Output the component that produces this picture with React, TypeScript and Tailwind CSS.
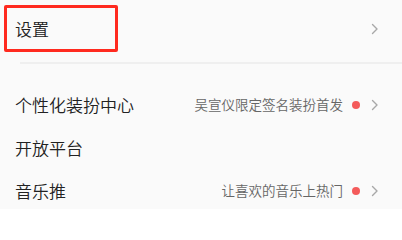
import React from "react";

function Chevron() {
  return (
    <svg width="8" height="12" viewBox="0 0 8 12" className="shrink-0">
      <polyline points="1.5,1.5 6,6 1.5,10.5" fill="none" stroke="#a8a8a8" strokeWidth="1.4" strokeLinecap="round" strokeLinejoin="round" />
    </svg>
  );
}

function Row({ title, hint, arrow = true }: { title: string; hint?: string; arrow?: boolean }) {
  return (
    <div className="flex h-[43px] items-center pl-[15px] pr-[23px]">
      <span className="flex-1 text-[17px] font-[350] text-[#222]">{title}</span>
      {hint && (
        <div className="flex items-center">
          <span className="text-[13.5px] font-[350] text-[#666]">{hint}</span>
          <span className="ml-[9px] h-[8px] w-[8px] rounded-full bg-[#f45b5b]" />
          <span className="ml-[11px]"><Chevron /></span>
        </div>
      )}
      {!hint && arrow && <Chevron />}
    </div>
  );
}

export default function App() {
  return (
    <div
      className="relative h-[209px] w-[402px] overflow-hidden bg-[#fafafa]"
      style={{ fontFamily: '"Noto Sans CJK SC", "Noto Sans", sans-serif' }}
    >
      <div className="flex h-[62px] items-center pb-[4px] pl-[15px] pr-[23px]">
        <span className="flex-1 text-[17px] font-[350] text-[#222]">设置</span>
        <Chevron />
      </div>
      <div className="ml-[20px] h-[2px] bg-[#efefef]" />
      <div className="pt-[19px]">
        <Row title="个性化装扮中心" hint="吴宣仪限定签名装扮首发" />
        <Row title="开放平台" arrow={false} />
        <Row title="音乐推" hint="让喜欢的音乐上热门" />
      </div>
      {/* annotation box */}
      <div className="absolute left-[4px] top-[5px] h-[47px] w-[114px] rounded-[2px] border-[3px] border-[#ff2a1f]" />
    </div>
  );
}
